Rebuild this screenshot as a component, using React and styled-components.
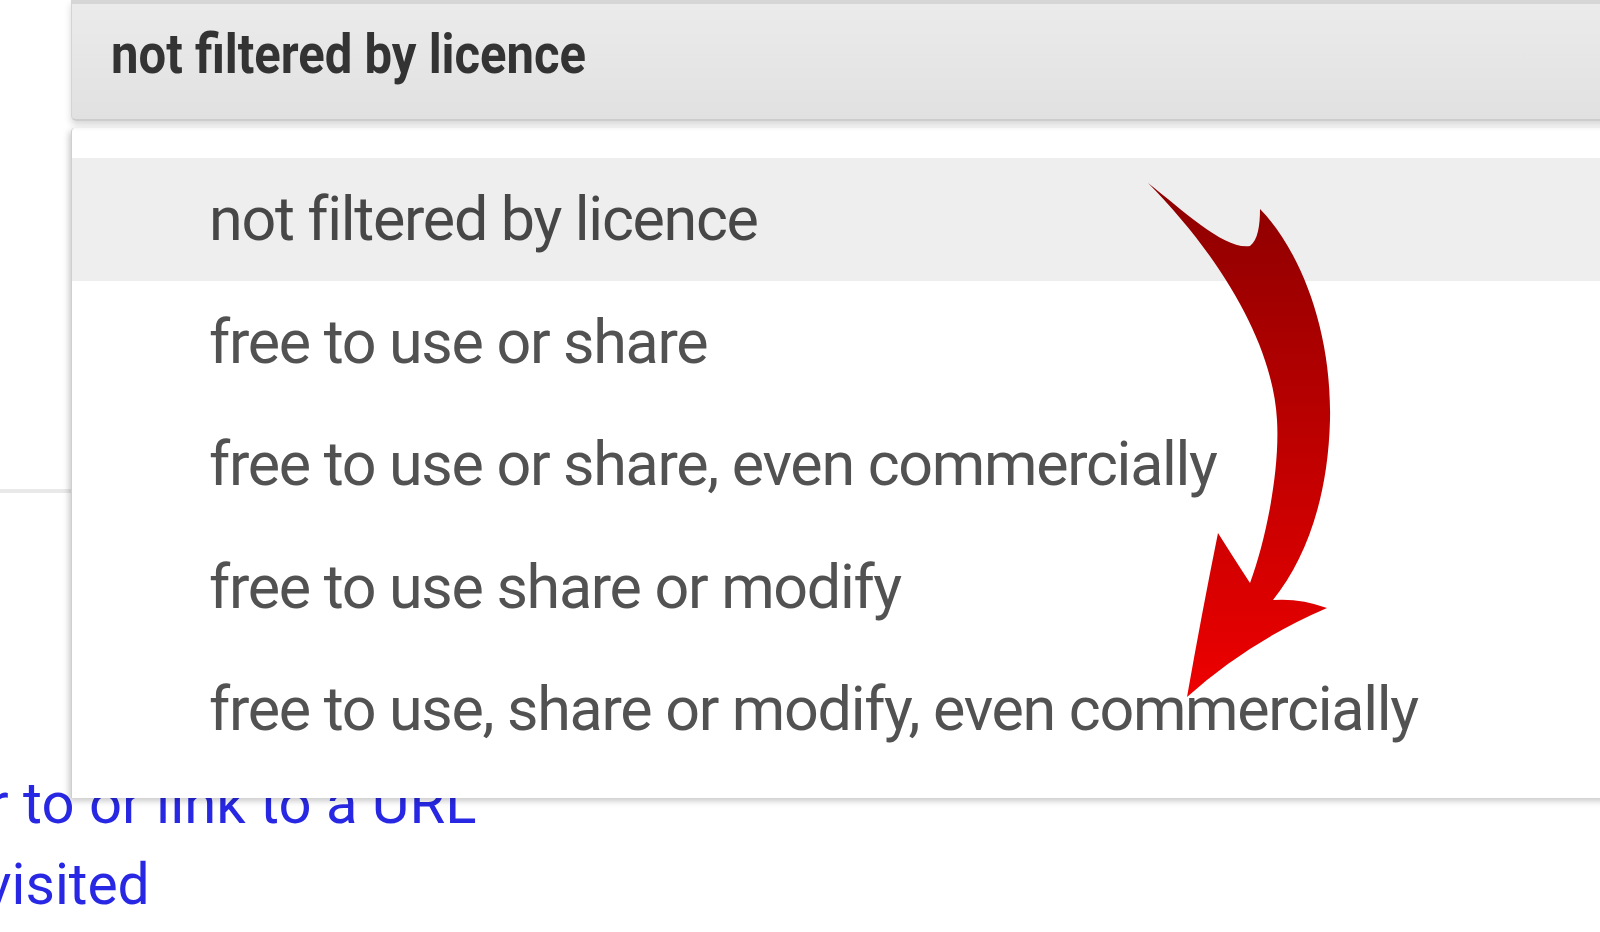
import React from "react";
import styled, { createGlobalStyle } from "styled-components";

const Global = createGlobalStyle`
  html, body { margin: 0; padding: 0; background: #ffffff; }
  body { font-family: Roboto, "Noto Sans", Arial, sans-serif; }
`;

const Page = styled.div`
  position: relative;
  width: 1600px;
  height: 932px;
  overflow: hidden;
  background: #ffffff;
  display: flex;
  flex-direction: column;
`;

const SelectBar = styled.div`
  position: relative;
  z-index: 2;
  box-sizing: border-box;
  height: 121px;
  margin-left: 71px;
  margin-right: -20px;
  padding: 17px 0 0 39px;
  border-top: 4px solid #d6d6d6;
  border-bottom: 2px solid #cdcdcd;
  border-left: 1px solid #d4d4d4;
  border-bottom-left-radius: 5px;
  background: linear-gradient(#ebebeb, #e1e1e1);
  box-shadow: 0 4px 7px rgba(0, 0, 0, 0.16);
`;

const SelectLabel = styled.span`
  display: inline-block;
  font-family: Roboto, Arial, sans-serif;
  font-weight: 700;
  font-size: 56px;
  line-height: 66px;
  color: #333333;
  transform: scaleX(0.875);
  transform-origin: left center;
  white-space: nowrap;
`;

const Rule = styled.div`
  margin-top: 368px;
  height: 4px;
  background: #e9e9e9;
`;

const Links = styled.div`
  margin-top: 269px;
  display: flex;
  flex-direction: column;
`;

const LinkLine = styled.span`
  font-family: Roboto, Arial, sans-serif;
  font-size: ${(p) => p.$size}px;
  line-height: 82px;
  color: #2828e4;
  white-space: nowrap;
  margin-left: ${(p) => p.$shift}px;
`;

const Menu = styled.ul`
  position: absolute;
  z-index: 1;
  top: 128px;
  left: 71px;
  right: -20px;
  margin: 0;
  padding: 30px 0 27px 0;
  list-style: none;
  background: #ffffff;
  border-left: 1px solid #cfcfcf;
  border-top-left-radius: 4px;
  box-shadow: -2px 3px 6px rgba(0, 0, 0, 0.22);
`;

const Item = styled.li`
  height: 122.5px;
  box-sizing: border-box;
  padding-left: 137px;
  font-family: Roboto, Arial, sans-serif;
  font-size: 61px;
  line-height: 122px;
  letter-spacing: -1.3px;
  color: ${(p) => (p.$active ? "#474747" : "#525252")};
  background: ${(p) => (p.$active ? "#eeeeee" : "#ffffff")};
  white-space: nowrap;
`;

const Overlay = styled.svg`
  position: absolute;
  z-index: 3;
  left: 0;
  top: 0;
  pointer-events: none;
`;

const options = [
  "not filtered by licence",
  "free to use or share",
  "free to use or share, even commercially",
  "free to use share or modify",
  "free to use, share or modify, even commercially",
];

function CurvedArrow() {
  return (
    <Overlay width="1600" height="932" viewBox="0 0 1600 932">
      <defs>
        <linearGradient id="arrowFill" gradientUnits="userSpaceOnUse" x1="0" y1="183" x2="0" y2="697">
          <stop offset="0" stopColor="#8c0000" />
          <stop offset="1" stopColor="#ee0000" />
        </linearGradient>
      </defs>
      <path
        fill="url(#arrowFill)"
        d="M1148,183
           C1185,212 1225,250 1250,246
           C1258,240 1260,225 1260,209
           C1300,250 1332,330 1330,420
           C1328,500 1305,560 1273,600
           Q1300,598 1327,608
           Q1248,642 1187,697
           Q1202,612 1218,533
           Q1235,560 1250,583
           C1266,540 1280,470 1277,420
           C1273,345 1222,258 1148,183 Z"
      />
    </Overlay>
  );
}

export default function App() {
  return (
    <>
      <Global />
      <Page>
        <SelectBar>
          <SelectLabel>not filtered by licence</SelectLabel>
        </SelectBar>
        <Rule />
        <Links>
          <LinkLine $size={58} $shift={-11}>r to or link to a URL</LinkLine>
          <LinkLine $size={57} $shift={-16}>visited</LinkLine>
        </Links>
        <Menu>
          {options.map((o, i) => (
            <Item key={o} $active={i === 0}>
              {o}
            </Item>
          ))}
        </Menu>
        <CurvedArrow />
      </Page>
    </>
  );
}
